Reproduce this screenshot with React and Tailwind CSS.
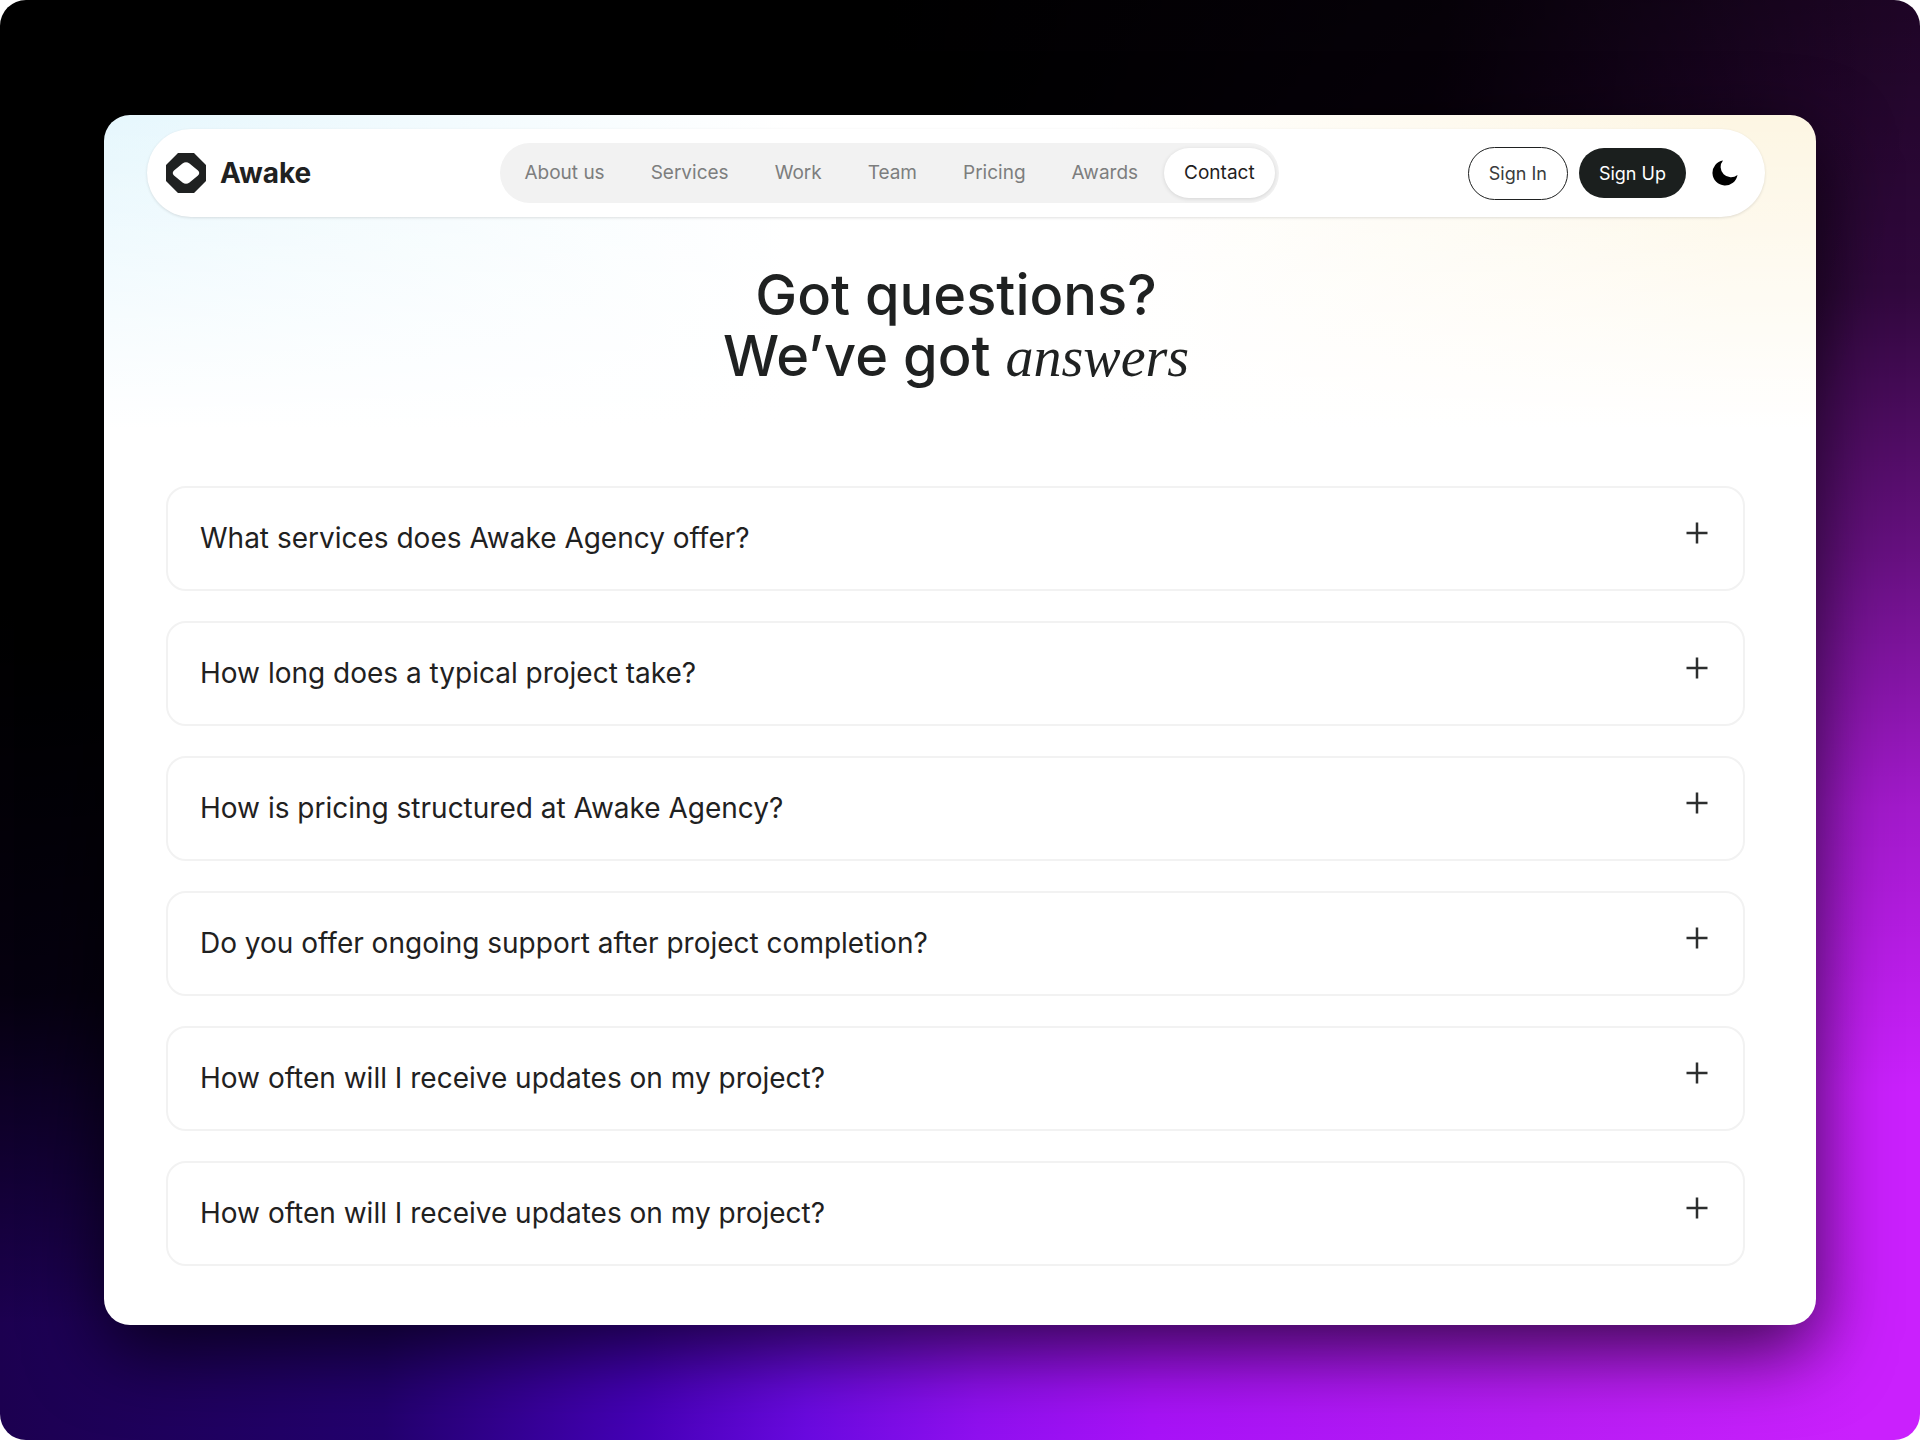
import React, { useState } from 'react';

const navLinks = ['About us', 'Services', 'Work', 'Team', 'Pricing', 'Awards', 'Contact'];

const questions = [
  'What services does Awake Agency offer?',
  'How long does a typical project take?',
  'How is pricing structured at Awake Agency?',
  'Do you offer ongoing support after project completion?',
  'How often will I receive updates on my project?',
  'How often will I receive updates on my project?',
];

const Logo = () => (
  <a href="#home" className="flex items-center gap-[14px] text-[#1f2121]">
    <svg viewBox="0 0 40 40" className="size-10" aria-hidden="true">
      <path
        fill="currentColor"
        fillRule="evenodd"
        d="M12 0H28L40 12V28L28 40H12L0 28V12ZM16.5 10.5L8 17.5Q5.5 20 8 22.5L16.5 29.5Q20 32 23.5 29.5L32 22.5Q34.5 20 32 17.5L23.5 10.5Q20 8 16.5 10.5Z"
      />
    </svg>
    <span className="text-[28px] font-bold">Awake</span>
  </a>
);

const Header = ({ active, setActive }) => (
  <header className="flex h-[88px] items-center justify-between rounded-full bg-white pl-[19px] pr-[27px] shadow-[0_1px_3px_rgba(0,0,0,0.12)]">
    <Logo />
    <nav className="flex h-[60px] items-center gap-[6px] rounded-full bg-[#f2f2f2] px-1">
      {navLinks.map((link) => (
        <a
          key={link}
          href="#"
          onClick={() => setActive(link)}
          className={`flex h-[50px] items-center rounded-full px-5 text-[19px] ${
            active === link
              ? 'bg-white text-[#1f2121] shadow-[0_1px_4px_rgba(0,0,0,0.12)]'
              : 'text-[#7d7e7e]'
          }`}
        >
          {link}
        </a>
      ))}
    </nav>
    <div className="flex items-center text-[18px]">
      <button type="button" className="h-[53px] rounded-full border border-[#1f2121] px-5 text-[#3a3c3c]">
        Sign In
      </button>
      <button type="button" className="ml-[11px] h-[50px] rounded-full bg-[#1b1f1e] px-5 text-white">
        Sign Up
      </button>
      <button type="button" aria-label="Toggle theme" className="ml-[26px]">
        <svg viewBox="0 0 26 26" className="size-[26px]" fill="#000">
          <path d="M11 0.5A12.6 12.6 0 1 0 25.5 15A10.3 10.3 0 0 1 11 0.5Z" />
        </svg>
      </button>
    </div>
  </header>
);

const FaqItem = ({ question, open, onToggle }) => (
  <li className="rounded-[20px] border-2 border-[#f2f2f2] bg-white">
    <button
      type="button"
      aria-expanded={open}
      onClick={onToggle}
      className="flex h-[101px] w-full items-start justify-between px-8 pt-[29px] text-left text-[28px] leading-[42px] text-[#1f2121]"
    >
      {question}
      <svg viewBox="0 0 22 22" className="mr-[3px] mt-[5px] size-[22px]" stroke="#2c2e2e" strokeWidth="2.5">
        <path d="M0.5 11H21.5M11 0.5V21.5" />
      </svg>
    </button>
  </li>
);

const App = () => {
  const [active, setActive] = useState('Contact');
  const [openIndex, setOpenIndex] = useState(null);

  return (
    <div className="min-h-screen bg-white font-['Inter','Liberation_Sans',sans-serif]">
      <div className="min-h-screen rounded-[26px] bg-black bg-[radial-gradient(ellipse_100%_92%_at_0%_0%,#000_46%,rgba(0,0,0,0.8)_75%,transparent_100%),linear-gradient(to_bottom,rgba(0,0,0,0.85)_0%,rgba(0,0,0,0.76)_20%,rgba(0,0,0,0.5)_38%,rgba(0,0,0,0.2)_56%,transparent_76%),linear-gradient(to_right,#1c0050_0%,#23006e_20%,#4400b5_33%,#6a0ae0_42%,#9010f0_51%,#a812f8_60%,#b81df5_80%,#ca20fd_97%)] px-[104px] py-[115px]">
        <main className="min-h-[1210px] rounded-[26px] bg-white bg-[linear-gradient(to_bottom,transparent_0%,#fff_26%),linear-gradient(to_right,#e6f7fd_0%,#fff_40%,#fff_58%,#fdf6e3_95%)] pb-[59px] pl-[43px] pr-[51px] pt-[14px] shadow-[0_26px_76px_rgba(0,0,0,0.7)]">
          <Header active={active} setActive={setActive} />

          <h1 className="mt-[48px] text-center text-[56px] font-medium leading-[61px] text-[#1f2121]">
            Got questions?
            <br />
            We’ve got{' '}
            <em className="font-['Liberation_Serif',serif] font-normal">answers</em>
          </h1>

          <ul className="ml-[19px] mr-5 mt-[98px] flex flex-col gap-[30px]">
            {questions.map((question, i) => (
              <FaqItem
                key={i}
                question={question}
                open={openIndex === i}
                onToggle={() => setOpenIndex(openIndex === i ? null : i)}
              />
            ))}
          </ul>
        </main>
      </div>
    </div>
  );
};

export default App;
